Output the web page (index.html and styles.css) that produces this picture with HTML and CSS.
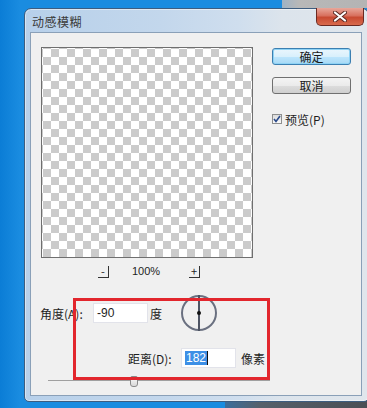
FILE: index.html
```html
<!DOCTYPE html>
<html lang="zh">
<head>
<meta charset="utf-8">
<title>动感模糊</title>
<link rel="stylesheet" href="styles.css">
</head>
<body>
<div class="desktop">
  <div class="corner-top"></div>
  <div class="corner-bottom"></div>
  <div class="window">
    <div class="titlebar">
      <span class="title">动感模糊</span>
      <div class="close"><svg width="14" height="11" viewBox="0 0 14 11"><path d="M2 1.5 L12 9.5 M12 1.5 L2 9.5" stroke="#5a2a22" stroke-width="4" stroke-linecap="round"/><path d="M2 1.5 L12 9.5 M12 1.5 L2 9.5" stroke="#ffffff" stroke-width="2.2" stroke-linecap="round"/></svg></div>
    </div>
    <div class="client">
      <div class="top">
        <div class="preview-col">
          <div class="preview"></div>
          <div class="zoombar">
            <span class="zbtn">-</span>
            <span class="zoomval">100%</span>
            <span class="zbtn">+</span>
          </div>
        </div>
        <div class="side">
          <div class="btn btn-default">确定</div>
          <div class="btn">取消</div>
          <div class="check-row">
            <span class="checkbox"><svg width="8" height="8" viewBox="0 0 8 8"><path d="M1 4 L3 6.5 L7 1" fill="none" stroke="#2a4a8a" stroke-width="1.6"/></svg></span>
            <span>预览(P)</span>
          </div>
        </div>
      </div>
      <div class="angle-row">
        <span class="label">角度(A):</span>
        <span class="field">-90</span>
        <span class="unit">度</span>
        <span class="dial"><span class="dial-line"></span><span class="dial-dot"></span></span>
      </div>
      <div class="dist-row">
        <span class="label">距离(D):</span>
        <span class="field"><span class="sel">182</span><span class="caret"></span></span>
        <span class="unit2">像素</span>
      </div>
      <div class="slider-row">
        <div class="slider"><span class="thumb"></span></div>
      </div>
    </div>
  </div>
  <div class="annotation"></div>
</div>
</body>
</html>
```
FILE: styles.css
```css
html, body {
  margin: 0;
  padding: 0;
}
body {
  width: 367px;
  height: 408px;
  overflow: hidden;
  background: linear-gradient(to right, #0b7dd6 0, #1a8ce0 20px, #1a8ce0 100%);
  font-family: "Noto Sans CJK SC", "Noto Sans", sans-serif;
  font-size: 12px;
  color: #1e1e1e;
}
.desktop {
  position: relative;
  width: 367px;
  height: 408px;
}
.corner-top {
  position: absolute;
  left: 282px;
  top: 0;
  width: 85px;
  height: 8px;
  background: linear-gradient(to right, #9fb2c4, #b8b8b8 20%, #b4b4b4);
}
.corner-bottom {
  position: absolute;
  left: 225px;
  top: 401px;
  width: 142px;
  height: 7px;
  background: linear-gradient(to right, #3b6d9c, #56606a 25%, #4b4f55);
}
.window {
  position: absolute;
  left: 24px;
  top: 8px;
  width: 345px;
  height: 394px;
  box-sizing: border-box;
  border: 1px solid #3d5d80;
  border-radius: 7px 7px 5px 5px;
  background: linear-gradient(to right, #b7d0ea 0, #c3d7ec 40%, #cfdeee 62%, #dce4ec 75%, #e0e6ec 100%);
  box-shadow: inset 0 0 0 1px rgba(255,255,255,0.45);
  padding: 0 6px 5px 5px;
  display: flex;
  flex-direction: column;
}
.titlebar {
  height: 23px;
  display: flex;
  align-items: center;
  padding-left: 2px;
  position: relative;
}
.title {
  color: #3a3a3a;
  font-size: 12px;
  letter-spacing: 0.5px;
  margin-top: 1px;
}
.close {
  position: absolute;
  right: -2px;
  top: -1px;
  width: 48px;
  height: 18px;
  box-sizing: border-box;
  border: 1px solid #6b2a22;
  border-top: none;
  border-radius: 0 0 5px 5px;
  background: linear-gradient(#e8a79a 0, #d8705e 45%, #c84a32 55%, #d86a4c 100%);
  display: flex;
  align-items: center;
  justify-content: center;
}
.client {
  flex: 1;
  background: #f0f0f0;
  border: 1px solid #8aa0b8;
  padding: 14px 0 0 10px;
  display: flex;
  flex-direction: column;
}
.top {
  display: flex;
}
.preview-col {
  width: 212px;
}
.preview {
  width: 212px;
  height: 211px;
  box-sizing: border-box;
  border: 1px solid #6f6f6f;
  background-color: #ffffff;
  background-image: conic-gradient(#cbcbcb 25%, #ffffff 0 50%, #cbcbcb 0 75%, #ffffff 0);
  background-size: 16px 16px;
  background-position: 1px 1px;
}
.zoombar {
  margin-top: 7px;
  height: 13px;
  display: flex;
  align-items: center;
  padding-left: 57px;
}
.zbtn {
  width: 11px;
  height: 12px;
  box-sizing: border-box;
  border-right: 1px solid #333;
  border-bottom: 1px solid #333;
  font-size: 11px;
  line-height: 10px;
  text-align: center;
  color: #222;
}
.zoomval {
  margin-left: 23px;
  width: 57px;
  font-size: 11px;
  line-height: 13px;
  font-family: "Liberation Sans", sans-serif;
}
.side {
  margin-left: 19px;
  padding-top: 1px;
  display: flex;
  flex-direction: column;
}
.btn {
  width: 79px;
  height: 17px;
  box-sizing: border-box;
  border: 1px solid #707070;
  border-radius: 3px;
  background: linear-gradient(#f4f4f4 0, #ebebeb 50%, #dddddd 51%, #cfcfcf 100%);
  display: flex;
  align-items: center;
  justify-content: center;
  font-size: 12px;
  line-height: 1;
  color: #1a1a1a;
}
.btn + .btn {
  margin-top: 12px;
}
.btn-default {
  border-color: #3c7fb1;
  box-shadow: inset 0 0 0 1px #8fd3f5;
  background: linear-gradient(#eaf6fd 0, #d9f0fc 50%, #bee6fd 51%, #a7d9f5 100%);
}
.check-row {
  margin-top: 19px;
  display: flex;
  align-items: center;
  gap: 3px;
  height: 12px;
}
.checkbox {
  width: 10px;
  height: 10px;
  box-sizing: border-box;
  border: 1px solid #8e8f8f;
  background: linear-gradient(#dcdcdc, #fafafa);
  display: flex;
  align-items: center;
  justify-content: center;
}
.angle-row {
  margin-top: 17px;
  height: 36px;
  display: flex;
  align-items: center;
}
.label {
  width: 52px;
  white-space: nowrap;
  margin-left: -1px;
  padding-right: 1px;
}
.field {
  width: 55px;
  height: 20px;
  box-sizing: border-box;
  background: #ffffff;
  border: 1px solid #e2e3ea;
  display: flex;
  align-items: center;
  padding-left: 3px;
  font-family: "Liberation Sans", sans-serif;
  font-size: 12px;
}
.unit {
  margin-left: 2px;
  width: 12px;
}
.dial {
  margin-left: 19px;
  width: 36px;
  height: 36px;
  box-sizing: border-box;
  border: 2px solid #6a7080;
  border-radius: 50%;
  position: relative;
  display: flex;
  align-items: center;
  justify-content: center;
}
.dial-line {
  width: 2px;
  height: 36px;
  background: #4e5463;
}
.dial-dot {
  position: absolute;
  left: 14px;
  top: 14px;
  width: 4px;
  height: 4px;
  border-radius: 50%;
  background: #111;
}
.dist-row {
  margin-top: 17px;
  height: 20px;
  display: flex;
  align-items: center;
  padding-left: 88px;
}
.sel {
  background: #3d8fe6;
  color: #ffffff;
  padding: 0 1px;
  line-height: 14px;
}
.caret {
  width: 1px;
  height: 14px;
  background: #111;
}
.unit2 {
  margin-left: 5px;
}
.slider-row {
  margin-top: 8px;
  padding-left: 7px;
}
.slider {
  width: 222px;
  height: 11px;
  background: linear-gradient(#a0a0a0, #a0a0a0) 0 4px / 100% 1px no-repeat;
  padding-left: 82px;
  box-sizing: border-box;
}
.thumb {
  display: block;
  width: 8px;
  height: 11px;
  box-sizing: border-box;
  border: 1px solid #8a8a8a;
  border-radius: 2px 2px 3px 3px;
  background: linear-gradient(#fafafa, #d8d8d8);
}
.annotation {
  position: absolute;
  left: 73px;
  top: 298px;
  width: 197px;
  height: 82px;
  box-sizing: border-box;
  border: 3px solid #e2262d;
}
```
